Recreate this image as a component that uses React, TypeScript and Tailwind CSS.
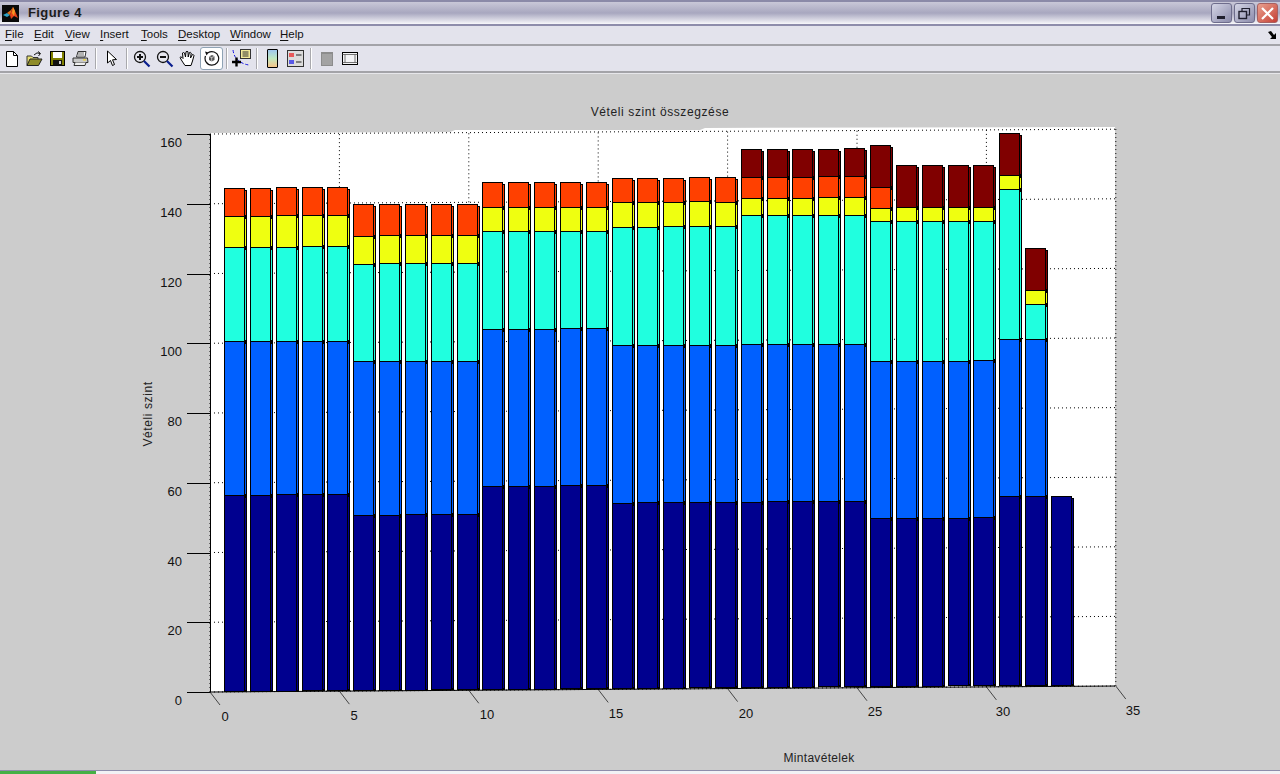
import type { ReactNode } from 'react';

// segment colours, bottom to top
const COLORS = ['#00008f', '#0060ff', '#20ffdf', '#efff10', '#ff4000', '#800000'];

// y of each segment's top edge, [dark, blue, cyan, yellow, orange, maroon]; 0 = segment missing
const BARS: number[][] = [
  [495, 341, 247, 216, 188, 0],
  [495, 341, 247, 216, 188, 0],
  [494, 341, 247, 215, 187, 0],
  [494, 341, 246, 215, 187, 0],
  [494, 341, 246, 215, 187, 0],
  [515, 361, 264, 236, 204, 0],
  [515, 361, 263, 235, 204, 0],
  [514, 361, 263, 235, 204, 0],
  [514, 361, 263, 235, 204, 0],
  [514, 361, 263, 235, 204, 0],
  [486, 329, 231, 207, 182, 0],
  [486, 329, 231, 207, 182, 0],
  [486, 329, 231, 207, 182, 0],
  [485, 328, 231, 207, 182, 0],
  [485, 328, 231, 207, 182, 0],
  [503, 345, 227, 202, 178, 0],
  [502, 345, 227, 202, 178, 0],
  [502, 345, 226, 202, 178, 0],
  [502, 345, 226, 201, 177, 0],
  [502, 345, 226, 202, 177, 0],
  [502, 344, 215, 198, 177, 149],
  [501, 344, 215, 198, 177, 149],
  [501, 344, 215, 198, 177, 149],
  [501, 344, 215, 197, 176, 149],
  [501, 344, 215, 197, 176, 148],
  [518, 361, 221, 208, 187, 145],
  [518, 361, 221, 207, 0, 165],
  [518, 361, 221, 207, 0, 165],
  [518, 361, 221, 207, 0, 165],
  [517, 360, 221, 207, 0, 165],
  [496, 339, 189, 175, 0, 133],
  [496, 339, 304, 290, 0, 248],
  [496, 0, 0, 0, 0, 0],
];

const Y_TICKS = [0, 20, 40, 60, 80, 100, 120, 140, 160];
const X_TICKS = [0, 5, 10, 15, 20, 25, 30, 35];
const X_LABELS: [number, number][] = [[225, 721], [354, 720], [487, 719], [616, 718], [746, 718], [875, 716], [1003, 716], [1133, 715]];

function Bar({ index, tops }: { index: number; tops: number[] }) {
  const x = Math.round(224 + 25.84 * index);
  const base = Math.round(691 - index * 0.2);
  const present = tops.map((t, c) => ({ t, c })).filter((s) => s.t > 0);
  const top = present[present.length - 1].t;
  return (
    <g shapeRendering="crispEdges">
      <rect x={x + 2} y={top + 2} width={21} height={base - top - 1} fill="#000" />
      {present.map((s, i) => {
        const bottom = i === 0 ? base : present[i - 1].t;
        return (
          <g key={s.c}>
            <rect x={x + 21} y={s.t + 3} width={1} height={bottom - s.t - 4} fill={COLORS[s.c]} />
            <rect x={x + 0.5} y={s.t + 0.5} width={20} height={bottom - s.t} fill={COLORS[s.c]} stroke="#000" strokeWidth={1} />
          </g>
        );
      })}
    </g>
  );
}

function Chart() {
  return (
    <svg width={1280} height={696} viewBox="0 74 1280 696" className="block">
      <polygon points="210,133 450,132 455,130 700,130 705,128 1115,127 1115,686 210,692" fill="#fff" />
      {Y_TICKS.map((v, k) => {
        const yl = 692 - 69.75 * k;
        const yr = 686 - 69.6 * k;
        return (
          <g key={v}>
            <line x1={210} y1={yl} x2={1115} y2={yr} stroke="#000" strokeDasharray="1 3" />
            <line x1={187} y1={Math.round(yl) + 0.5} x2={210} y2={Math.round(yl) + 0.5} stroke="#000" />
            <text x={182} y={yl + 13} textAnchor="end" className="text-[13px] fill-[#111]">{v}</text>
          </g>
        );
      })}
      {X_TICKS.map((v, j) => {
        const x = 210 + 129.4 * j;
        const yb = 692 - j * 0.85;
        const yt = 134 - j * 0.72;
        return (
          <g key={v}>
            <line x1={x} y1={yb} x2={x} y2={yt} stroke="#000" strokeDasharray="1 3" />
            <line x1={x} y1={yb} x2={x + 10} y2={yb + 13} stroke="#222" strokeWidth={0.8} />
            <text x={X_LABELS[j][0]} y={X_LABELS[j][1]} textAnchor="middle" className="text-[13px] fill-[#111]">{v}</text>
          </g>
        );
      })}
      {BARS.map((tops, i) => (
        <Bar key={i} index={i} tops={tops} />
      ))}
      <line x1={210.5} y1={134} x2={210.5} y2={692} stroke="#000" />
      <line x1={210} y1={692} x2={1115} y2={686} stroke="#000" />
      <text x={660} y={116} textAnchor="middle" className="text-[12px] fill-[#222] tracking-[0.6px]">Vételi szint összegzése</text>
      <text x={819} y={762} textAnchor="middle" className="text-[12px] fill-[#222] tracking-[0.3px]">Mintavételek</text>
      <text transform="translate(152 414) rotate(-90)" textAnchor="middle" className="text-[12px] fill-[#222] tracking-[0.6px]">Vételi szint</text>
    </svg>
  );
}

function Logo() {
  return (
    <svg width={17} height={17} viewBox="0 0 17 17" className="ml-[2px] shrink-0">
      <rect width={17} height={17} fill="#0a0a0a" />
      <path d="M1 10 L5 8 L8 10 L5 12 Z" fill="#2fa3c7" />
      <path d="M5 8 L9 5 L11 2 L8 10 Z" fill="#e2701c" />
      <path d="M11 2 L13 6 L16 13 L12 11 L9 14 L8 10 Z" fill="#e8431a" />
      <path d="M11 2 L13 6 L12 11 L10 8 Z" fill="#f59a23" />
    </svg>
  );
}

function WinButton({ className, children }: { className: string; children: ReactNode }) {
  return (
    <div className={`w-[21px] h-[20px] rounded-[3px] border border-[#6e6d8c] flex items-center justify-center ${className}`}>
      {children}
    </div>
  );
}

function TitleBar() {
  return (
    <div className="h-[26px] shrink-0 flex items-center border-t-[2px] border-b-[2px] border-t-[#8b8aa8] border-b-[#8e8dab] bg-gradient-to-b from-[#c9c8d8] via-[#a8a7bf] via-50% to-[#f8f8fb]">
      <Logo />
      <span className="ml-[9px] text-[13px] font-bold tracking-[0.4px] text-[#1c1c1c]">Figure 4</span>
      <div className="ml-auto flex gap-[2px] pr-[2px]">
        <WinButton className="bg-gradient-to-br from-[#d5d6e6] to-[#8c8cac]">
          <div className="w-[8px] h-[3px] bg-[#1f1f2e] mt-[8px] -ml-[2px]" />
        </WinButton>
        <WinButton className="bg-gradient-to-br from-[#d5d6e6] to-[#8c8cac]">
          <svg width={13} height={13} viewBox="0 0 13 13" fill="none" stroke="#1f1f2e" strokeWidth={1.2}>
            <rect x={1} y={4.5} width={7.5} height={7} strokeWidth={1.4} />
            <path d="M4 4 V1.5 H11.5 V8 H9" />
          </svg>
        </WinButton>
        <WinButton className="bg-gradient-to-br from-[#e8a090] to-[#c43c34] border-[#a86060]">
          <svg width={15} height={15} viewBox="0 0 15 15" stroke="#fff" strokeWidth={2.2}>
            <path d="M2 2 L13 13 M13 2 L2 13" />
          </svg>
        </WinButton>
      </div>
    </div>
  );
}

const MENU: { label: string; w: string }[] = [
  { label: 'File', w: 'w-[29px]' },
  { label: 'Edit', w: 'w-[31px]' },
  { label: 'View', w: 'w-[35px]' },
  { label: 'Insert', w: 'w-[41px]' },
  { label: 'Tools', w: 'w-[37px]' },
  { label: 'Desktop', w: 'w-[52px]' },
  { label: 'Window', w: 'w-[50px]' },
  { label: 'Help', w: 'w-[30px]' },
];

function MenuBar() {
  return (
    <div className="h-[20px] shrink-0 flex items-center pl-[5px] bg-[#e3e3ec] border-b-[2px] border-[#a3a3a8] text-[11.5px] text-[#111]">
      {MENU.map((m) => (
        <span key={m.label} className={m.w}>
          <span className="underline underline-offset-2 decoration-1">{m.label[0]}</span>
          {m.label.slice(1)}
        </span>
      ))}
      <svg width={10} height={10} viewBox="0 0 10 10" className="ml-auto mr-[3px]">
        <path d="M1 2 L4 1 L7 5 L9 3 L9 9 L3 9 L5 7 Z" fill="#000" />
      </svg>
    </div>
  );
}

function Tool({ children, className = '' }: { children: ReactNode; className?: string }) {
  return <div className={`w-[23px] h-[23px] flex items-center justify-center ${className}`}>{children}</div>;
}

function Sep({ className }: { className: string }) {
  return <div className={`w-[2px] h-[21px] bg-[#a9a9ad] border-r border-white ${className}`} />;
}

function Magnifier({ plus }: { plus: boolean }) {
  return (
    <svg width={18} height={18} viewBox="0 0 18 18" fill="none">
      <circle cx={7} cy={7} r={5.5} fill="#e6e6ee" stroke="#111" strokeWidth={1.3} />
      <path d="M4 7 H10" stroke="#111" strokeWidth={2} />
      {plus && <path d="M7 4 V10" stroke="#111" strokeWidth={2} />}
      <path d="M11 11 L16.5 16.5" stroke="#0a1f8f" strokeWidth={2.2} />
    </svg>
  );
}

function Toolbar() {
  return (
    <div className="h-[27px] shrink-0 flex items-center bg-[#e3e3ec] border-b-[2px] border-[#a3a3a8]">
      <Tool>
        <svg width={16} height={18} viewBox="0 0 16 18">
          <path d="M2.5 1.5 H9.5 L13.5 5.5 V16.5 H2.5 Z" fill="#fff" stroke="#000" />
          <path d="M9.5 1.5 V5.5 H13.5" fill="none" stroke="#000" />
        </svg>
      </Tool>
      <Tool>
        <svg width={17} height={16} viewBox="0 0 17 16">
          <path d="M1 14.5 V5 H5.5 L7 6.5 H12 V8" fill="#e8e070" stroke="#333" />
          <path d="M1 14.5 L4 8 H16 L12.5 14.5 Z" fill="#8f8c2a" stroke="#222" />
          <path d="M8 4 Q11 0.5 14 2.5 M12 0.5 L14.5 2.5 L12.5 5" fill="none" stroke="#111" />
        </svg>
      </Tool>
      <Tool>
        <svg width={15} height={15} viewBox="0 0 15 15">
          <rect x={0.5} y={0.5} width={14} height={14} fill="#808000" stroke="#000" />
          <rect x={3} y={1} width={9} height={6} fill="#fff" />
          <rect x={3} y={9} width={9} height={5.5} fill="#111" />
          <rect x={9} y={10} width={2} height={3} fill="#cfcfcf" />
        </svg>
      </Tool>
      <Tool>
        <svg width={17} height={15} viewBox="0 0 17 15">
          <path d="M4.5 6 L6 0.5 H14 L13 6 Z" fill="#fff" stroke="#333" />
          <path d="M1 7 H15.5 L16 11.5 H1 Z" fill="#c8c8c8" stroke="#333" />
          <path d="M3 11.5 L2 14.5 H13 L14 11.5" fill="#efefef" stroke="#333" />
          <path d="M6 2 H12 M6 4 H12" stroke="#666" />
          <rect x={11} y={8.2} width={3} height={1.4} fill="#e8d040" />
        </svg>
      </Tool>
      <Sep className="ml-[3px] mr-[3px]" />
      <Tool>
        <svg width={12} height={17} viewBox="0 0 12 17">
          <path d="M1.5 1 V13 L4.5 10.5 L6.5 15.5 L8.5 14.5 L6.5 9.8 L10.5 9.5 Z" fill="#fff" stroke="#000" />
        </svg>
      </Tool>
      <Sep className="ml-[3px] mr-[2px]" />
      <Tool><Magnifier plus /></Tool>
      <Tool><Magnifier plus={false} /></Tool>
      <Tool>
        <svg width={17} height={17} viewBox="0 0 17 17">
          <path d="M3 11 L1 7.5 Q1.5 6.3 3 7.5 L4 8.5 L3.5 3 Q4.5 2 5.5 3 L6.5 7 L7 1.8 Q8 1 9 1.8 L9.2 7 L10.5 2.5 Q11.5 2 12.2 3 L11.5 8 L13.5 4.5 Q14.7 4.5 15 5.5 L13.5 11 L12 15.5 H6 Z" fill="#fff" stroke="#000" />
        </svg>
      </Tool>
      <Tool className="ml-[1px] bg-white rounded-[3px] border border-[#8fa3b5]">
        <svg width={17} height={17} viewBox="0 0 17 17" fill="none">
          <path d="M5 2.8 A6.8 6.8 0 1 1 2.5 6" stroke="#111" strokeWidth={1.2} />
          <path d="M2 1.5 L5.8 2.5 L3.5 5.5 Z" fill="#111" />
          <path d="M6 6.5 L9 5 L11.5 6.3 V10 L8.7 11.5 L6 10 Z" fill="#555" />
          <path d="M8.7 7.5 V11.5 M6 6.5 L8.7 7.5 L11.5 6.3" stroke="#eee" strokeWidth={0.7} />
        </svg>
      </Tool>
      <Sep className="ml-[3px] mr-[2px]" />
      <Tool>
        <svg width={21} height={21} viewBox="0 0 21 21" fill="none">
          <path d="M2 2 Q3 9 7 12 Q11 16 18 17" stroke="#1a1ae0" strokeDasharray="3 2" />
          <rect x={9.5} y={1.5} width={10} height={9} fill="#f2e99a" stroke="#333" />
          <path d="M11.5 4 H17.5 M11.5 6 H17.5 M11.5 8 H17.5" stroke="#333" />
          <path d="M1 14 H10 M5.5 9.5 V18.5" stroke="#000" strokeWidth={2.4} />
        </svg>
      </Tool>
      <Sep className="ml-[3px] mr-[3px]" />
      <Tool>
        <div className="w-[11px] h-[19px] border-[1.5px] border-black rounded-[1px] bg-gradient-to-b from-[#9fc6ee] via-[#bfe8c0] to-[#f4c488]" />
      </Tool>
      <Tool>
        <svg width={17} height={17} viewBox="0 0 17 17">
          <rect x={0.5} y={0.5} width={16} height={16} fill="#dcdcdc" stroke="#333" />
          <rect x={2} y={3} width={5} height={4} fill="#e85a5a" />
          <rect x={2} y={10} width={5} height={4} fill="#5a5ae8" />
          <path d="M9 5 H14.5 M9 12 H14.5" stroke="#222" />
        </svg>
      </Tool>
      <Sep className="ml-[3px] mr-[3px]" />
      <Tool>
        <div className="w-[12px] h-[14px] bg-[#a3a3a3] border border-[#8c8c8c] border-t-[2px]" />
      </Tool>
      <Tool>
        <svg width={16} height={13} viewBox="0 0 16 13">
          <rect x={0.5} y={0.5} width={15} height={12} fill="#f4f4f6" stroke="#000" />
          <path d="M0.5 2.5 H15.5 M0.5 10.5 H15.5 M3 2.5 V10.5 M13 2.5 V10.5" stroke="#555" strokeWidth={0.8} fill="none" />
        </svg>
      </Tool>
    </div>
  );
}

export default function App() {
  return (
    <div className="w-[1280px] h-[774px] overflow-hidden flex flex-col bg-[#cccccc] font-['Liberation_Sans',sans-serif]">
      <TitleBar />
      <MenuBar />
      <Toolbar />
      <div className="h-px shrink-0 bg-[#e6e6ea]" />
      <div className="flex-1 min-h-0">
        <Chart />
      </div>
      <div className="h-[4px] shrink-0 flex border-t border-[#8e8dab] bg-[#f2f2f5]">
        <div className="w-[96px] bg-[#46b046]" />
      </div>
    </div>
  );
}
